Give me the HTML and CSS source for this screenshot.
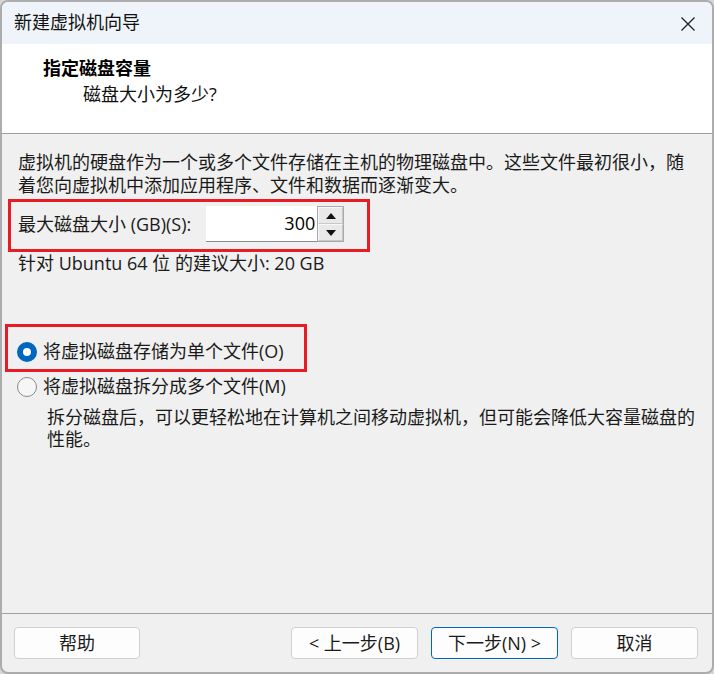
FILE: index.html
```html
<!DOCTYPE html>
<html lang="zh-CN">
<head>
<meta charset="utf-8">
<title>新建虚拟机向导</title>
<link rel="stylesheet" href="styles.css">
</head>
<body>
<div class="window">
  <div class="titlebar">
    <span class="title">新建虚拟机向导</span>
    <span class="close">
      <svg width="16" height="16" viewBox="0 0 16 16"><path d="M1.5 1.5 L14.5 14.5 M14.5 1.5 L1.5 14.5" stroke="#1b1b1b" stroke-width="1.2" fill="none"/></svg>
    </span>
  </div>
  <div class="header">
    <div class="heading">指定磁盘容量</div>
    <div class="subheading">磁盘大小为多少?</div>
  </div>
  <div class="content">
    <p class="intro">虚拟机的硬盘作为一个或多个文件存储在主机的物理磁盘中。这些文件最初很小，随<br>着您向虚拟机中添加应用程序、文件和数据而逐渐变大。</p>
    <div class="mark mark-size">
      <label class="size-label">最大磁盘大小 (GB)(S):</label>
      <div class="spin">
        <div class="spin-value">300</div>
        <div class="spin-buttons">
          <div class="spin-btn"><svg width="10" height="6" viewBox="0 0 10 6"><path d="M5 0 L10 6 L0 6 Z" fill="#111"/></svg></div>
          <div class="spin-btn"><svg width="10" height="6" viewBox="0 0 10 6"><path d="M0 0 L10 0 L5 6 Z" fill="#111"/></svg></div>
        </div>
      </div>
    </div>
    <div class="hint">针对 Ubuntu 64 位 的建议大小: 20 GB</div>
    <div class="mark mark-radio">
      <div class="radio-row">
        <span class="radio checked"></span>
        <span>将虚拟磁盘存储为单个文件(O)</span>
      </div>
    </div>
    <div class="radio-row second">
      <span class="radio"></span>
      <span>将虚拟磁盘拆分成多个文件(M)</span>
    </div>
    <p class="desc">拆分磁盘后，可以更轻松地在计算机之间移动虚拟机，但可能会降低大容量磁盘的<br>性能。</p>
  </div>
  <div class="footer">
    <button class="btn btn-help">帮助</button>
    <div class="nav">
      <button class="btn">&lt; 上一步(B)</button>
      <button class="btn btn-primary">下一步(N) &gt;</button>
      <button class="btn">取消</button>
    </div>
  </div>
</div>
</body>
</html>
```
FILE: styles.css
```css
html, body {
  margin: 0;
  padding: 0;
}
body {
  background: #d6d6d6;
  width: 714px;
  height: 674px;
  font-family: "Open Sans", "Noto Sans CJK SC", sans-serif;
  font-size: 18px;
  color: #1a1a1a;
}
.window {
  box-sizing: border-box;
  width: 714px;
  height: 674px;
  border: 2px solid #acacac;
  border-radius: 8px;
  overflow: hidden;
  background: #f0f0f0;
  display: flex;
  flex-direction: column;
}
.titlebar {
  height: 42px;
  flex: none;
  background: #eef4f9;
  display: flex;
  align-items: center;
  justify-content: space-between;
  padding: 0 16px 0 12px;
}
.title {
  line-height: 24px;
  color: #111;
  margin-top: -2px;
}
.close {
  display: flex;
  width: 16px;
  height: 16px;
  margin-top: 1px;
}
.header {
  flex: none;
  background: #ffffff;
  border-bottom: 1px solid #a0a0a0;
  padding: 11px 0 0 41px;
  height: 78px;
}
.heading {
  font-weight: bold;
  line-height: 26px;
  color: #000;
}
.subheading {
  line-height: 26px;
  padding-left: 40px;
  color: #111;
}
.content {
  flex: 1;
  padding: 17px 10px 0 16px;
}
.intro {
  margin: 0;
  line-height: 23px;
}
.mark {
  border: 3px solid #e81c24;
  box-sizing: border-box;
}
.mark-size {
  margin: 2px 0 0 -10px;
  width: 362px;
  height: 53px;
  padding: 4px 0 0 7px;
  display: flex;
  align-items: flex-start;
}
.size-label {
  line-height: 23px;
  margin-top: 7px;
  margin-right: 15px;
}
.spin {
  display: flex;
  height: 36px;
}
.spin-value {
  width: 111px;
  height: 36px;
  box-sizing: border-box;
  background: #ffffff;
  border-bottom: 1px solid #8c8c8c;
  text-align: right;
  padding-right: 2px;
  line-height: 34px;
  color: #000;
}
.spin-buttons {
  width: 27px;
  height: 36px;
  box-sizing: border-box;
  border: 1px solid #a9a9a9;
  display: flex;
  flex-direction: column;
  background: #e9e9e9;
}
.spin-btn {
  flex: 1;
  display: flex;
  align-items: center;
  justify-content: center;
  border: 1px solid #f7f7f7;
  border-bottom-color: #c8c8c8;
  border-right-color: #c8c8c8;
}
.hint {
  line-height: 23px;
  margin-top: 0;
}
.mark-radio {
  margin: 49px 0 0 -13px;
  width: 302px;
  height: 48px;
  padding: 13px 0 0 9px;
}
.radio-row {
  display: flex;
  align-items: center;
  gap: 6px;
  line-height: 23px;
}
.radio-row.second {
  margin: 3px 0 0 -1px;
}
.radio {
  box-sizing: border-box;
  width: 20px;
  height: 20px;
  border-radius: 50%;
  border: 1px solid #8a8a8a;
  background: #f6f6f6;
  flex: none;
}
.radio.checked {
  border: 6px solid #0067c0;
  background: #ffffff;
}
.desc {
  margin: 8px 0 0 29px;
  line-height: 22px;
}
.footer {
  flex: none;
  border-top: 1px solid #a0a0a0;
  padding: 13px 14px 13px 12px;
  display: flex;
  justify-content: space-between;
}
.nav {
  display: flex;
  gap: 13px;
}
.btn {
  width: 127px;
  height: 32px;
  box-sizing: border-box;
  border: 1px solid #d0d0d0;
  border-radius: 4px;
  background: #fdfdfd;
  font-family: "Open Sans", "Noto Sans CJK SC", sans-serif;
  font-size: 18px;
  color: #1a1a1a;
  padding: 0;
  line-height: 28px;
}
.btn-help {
  width: 126px;
}
.btn-primary {
  border-color: #0067c0;
}
```
